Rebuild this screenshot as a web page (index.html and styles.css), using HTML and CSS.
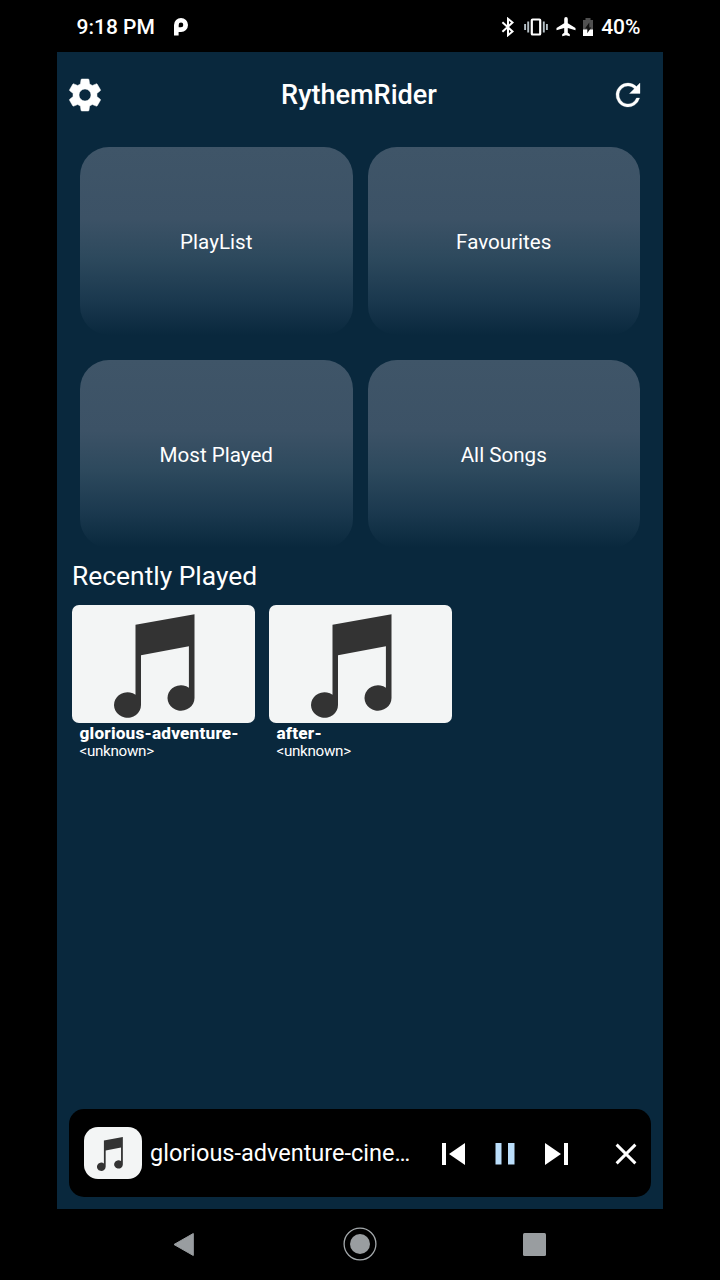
FILE: index.html
```html
<!DOCTYPE html>
<html lang="en">
<head>
<meta charset="utf-8">
<title>RythemRider</title>
<link rel="stylesheet" href="styles.css">
</head>
<body>
<svg class="defs" width="0" height="0">
  <symbol id="note" viewBox="0 0 81 104" preserveAspectRatio="none">
    <path d="M21.5 10.7 80.5.2V84a13.5 12.7 0 1 1-5.600-10.300V32.200L27 41.200V91a13.500 12.700 0 1 1-5.500-10.200Z" fill="#333"/>
  </symbol>
</svg>
<div class="phone">
  <div class="status">
    <span class="time">9:18 PM</span>
    <svg class="parking" width="14" height="18" viewBox="0 0 14 18"><path fill="#fff" fill-rule="evenodd" d="M0 17.500V7A7 7 0 1 1 7 14H4.600v3.500ZM4.700 6.900v2.300H7a2.300 2.300 0 1 0-2.300-2.300Z"/></svg>
    <div class="indicators">
      <svg width="14" height="20" viewBox="0 0 14 20"><path d="M1.400 5.300 11.500 14.500 7 18.200V1.800l4.500 3.700L1.400 14.700" fill="none" stroke="#fff" stroke-width="2"/></svg>
      <svg class="vibrate" width="24" height="18" viewBox="0 0 24 18"><rect x="7.800" y="1.500" width="8.400" height="15" rx=".8" fill="none" stroke="#fff" stroke-width="2.200"/><path d="M4.200 3.500v11M19.800 3.500v11M1.100 6v6M22.900 6v6" stroke="#b5c0c6" stroke-width="1.900"/></svg>
      <svg class="plane" width="20" height="20" viewBox="0 0 20 20"><path fill="#fff" d="M19.500 13.300v-2.200l-7.700-4.900V1.900a1.800 1.800 0 0 0-3.600 0v4.300L.5 11.100v2.200L8.200 11v4.800L6.200 17.300v1.900l3.800-1 3.800 1v-1.900L11.800 15.800V11Z"/></svg>
      <svg class="battery" width="10" height="18" viewBox="0 0 10 18"><path fill="#505050" d="M0 2h2.500V0h5v2H10v16H0Z"/><path fill="#fff" d="M0 11.500h10V18H0Z"/><path fill="#111" d="M6.300 4.500 2 10.500h2.300v4.800L8.200 9.500H6.300Z"/></svg>
      <span class="percent">40%</span>
    </div>
  </div>
  <div class="app">
    <header class="header">
      <svg width="40" height="40" viewBox="0 0 24 24"><path fill="#fff" stroke="#fff" stroke-width=".3" d="M19.140 12.940c.04-.3.06-.61.06-.94 0-.32-.02-.64-.07-.94l2.030-1.580c.18-.14.23-.41.12-.61l-1.920-3.320c-.12-.22-.37-.29-.59-.22l-2.390.96c-.5-.38-1.030-.7-1.620-.94l-.36-2.540c-.04-.24-.24-.41-.48-.41h-3.840c-.24 0-.43.17-.47.41l-.36 2.540c-.59.24-1.130.57-1.620.94l-2.390-.96c-.22-.08-.47 0-.59.22L2.740 8.870c-.12.21-.08.47.12.61l2.030 1.580c-.05.3-.09.63-.09.94s.02.64.07.94l-2.030 1.580c-.18.14-.23.41-.12.61l1.920 3.320c.12.22.37.29.59.22l2.390-.96c.5.38 1.030.7 1.620.94l.36 2.540c.05.24.24.41.48.41h3.840c.24 0 .44-.17.47-.41l.36-2.540c.59-.24 1.130-.56 1.620-.94l2.390.96c.22.08.47 0 .59-.22l1.920-3.320c.12-.22.07-.47-.12-.61ZM12 15.600A3.600 3.600 0 1 1 12 8.400a3.600 3.600 0 0 1 0 7.200Z"/></svg>
      <h1 class="title">RythemRider</h1>
      <svg class="refresh" width="36" height="36" viewBox="0 0 24 24"><path fill="#fff" stroke="#fff" stroke-width=".2" d="M17.650 6.350A7.958 7.958 0 0 0 12 4a8 8 0 1 0 7.730 10h-2.080A6 6 0 1 1 12 6c1.660 0 3.140.69 4.220 1.780L13 11h7V4Z"/></svg>
    </header>
    <nav class="tiles">
      <div class="tile">PlayList</div>
      <div class="tile">Favourites</div>
      <div class="tile">Most Played</div>
      <div class="tile">All Songs</div>
    </nav>
    <h2 class="section">Recently Played</h2>
    <div class="recent">
      <article class="song">
        <div class="cover"><svg width="81" height="104"><use href="#note"/></svg></div>
        <div class="name">glorious-adventure-</div>
        <div class="artist">&lt;unknown&gt;</div>
      </article>
      <article class="song">
        <div class="cover"><svg width="81" height="104"><use href="#note"/></svg></div>
        <div class="name">after-</div>
        <div class="artist">&lt;unknown&gt;</div>
      </article>
    </div>
    <div class="player">
      <div class="thumb"><svg width="26" height="34"><use href="#note"/></svg></div>
      <div class="track">glorious-adventure-cine…</div>
      <svg class="controls" width="128" height="24" viewBox="0 0 128 24"><path fill="#fff" d="M1 1h4v22H1ZM24 1v22L8 12ZM104 1v22l16-11ZM123 1h4v22h-4Z"/><path fill="#bbdefb" d="M54.500 1h6v21.500h-6ZM67 1h6.500v21.500H67Z"/></svg>
      <svg class="close" width="22" height="22" viewBox="0 0 22 22"><path d="m1.600 1.600 18.800 18.800M20.400 1.600 1.600 20.400" stroke="#fff" stroke-width="2.900"/></svg>
    </div>
  </div>
  <div class="navbar">
    <svg width="22" height="25" viewBox="0 0 22 25"><path fill="#999da0" stroke="#999da0" stroke-linejoin="round" d="M1 12.500 20.300 1.500v22Z"/></svg>
    <svg class="home" width="34" height="34" viewBox="0 0 34 34"><circle cx="17" cy="17" r="15.900" fill="none" stroke="#a4a9ac" stroke-width="1.300"/><circle cx="17" cy="17" r="10" fill="#999da0"/></svg>
    <svg width="23" height="23" viewBox="0 0 23 23"><rect width="23" height="23" rx="1.500" fill="#999da0"/></svg>
  </div>
</div>
</body>
</html>
```
FILE: styles.css
```css
* { box-sizing: border-box; }
body { margin: 0; background: #000; color: #fff; font-family: Roboto, "Liberation Sans", sans-serif; }
svg { display: block; flex: none; }
.defs { height: 0; }
.phone { width: 606px; height: 1280px; margin: 0 auto; display: flex; flex-direction: column; white-space: nowrap; }
.status { height: 52px; display: flex; align-items: center; padding: 1px 22.500px 0 19.500px; font-size: 21px; font-weight: 500; }
.time { width: 97.500px; padding-top: 1px; }
.indicators { margin-left: auto; display: flex; align-items: center; }
.vibrate { margin-left: 9px; }
.plane { margin-left: 8px; }
.battery { margin-left: 7px; }
.percent { margin-left: 8px; padding-top: 1px; }
.app { height: 1157px; background: #09283d; display: flex; flex-direction: column; }
.header { height: 84px; display: flex; align-items: center; justify-content: space-between; padding: 1px 17px 0 8px; }
.title { margin: 0 0 0 3px; font-size: 27.100px; font-weight: 500; }
.tiles { display: grid; grid-template-columns: 272.500px 272.500px; grid-auto-rows: 188px; column-gap: 15px; row-gap: 24.500px; padding: 11.300px 0 0 23px; }
.tile { display: flex; align-items: center; justify-content: center; padding-top: 2px; border-radius: 29px; font-size: 20.600px; background: linear-gradient(#3f5568 0%, #3c5266 38%, #2d495d 59%, #1a384e 82%, #09283d 100%); }
.section { margin: 11px 0 0 15px; font-size: 26.400px; line-height: 34px; font-weight: 400; }
.recent { display: flex; gap: 14.500px; margin: 12.700px 0 0 15px; }
.song { width: 182.500px; }
.cover { height: 118px; border-radius: 7px; background: #f3f5f5; padding: 9px 0 0 42px; }
.name { padding-left: 7.500px; font-size: 17.200px; line-height: 20px; letter-spacing: 0.2px; font-weight: 800; }
.artist { padding-left: 7.500px; font-size: 15.200px; line-height: 17px; letter-spacing: -0.3px; }
.player { margin: auto 12px 12px 11.500px; height: 88px; border-radius: 15px; background: #000; display: flex; align-items: center; padding: 0 14px 0 15px; }
.thumb { width: 58.500px; height: 51.500px; border-radius: 14px; background: #f3f5f5; padding: 10px 0 0 13.500px; }
.track { width: 262px; margin-left: 8px; font-size: 23.500px; }
.controls { margin: 1px 0 0 28.500px; }
.close { margin: 1px 0 0 auto; }
.navbar { height: 71px; display: flex; align-items: center; justify-content: space-between; padding: 0 117px 0 116px; }
.home { margin: -2px 0 0 1px; }
```
